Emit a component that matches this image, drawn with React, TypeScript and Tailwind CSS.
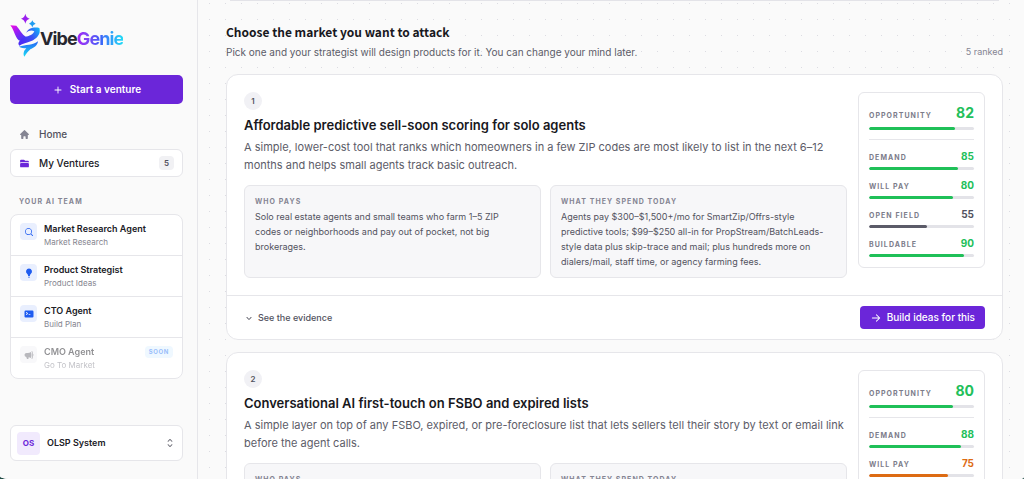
import { clsx } from 'clsx';
import type { IconType } from 'react-icons';
import {
  HiMiniArrowRight,
  HiMiniChevronDown,
  HiMiniChevronUpDown,
  HiMiniCommandLine,
  HiMiniFolder,
  HiMiniHome,
  HiMiniLightBulb,
  HiMiniMagnifyingGlass,
  HiMiniMegaphone,
  HiMiniPlus,
} from 'react-icons/hi2';

type Tone = 'good' | 'warn' | 'neutral';

interface Score {
  label: string;
  value: number;
  tone: Tone;
}

interface Market {
  rank: number;
  title: string;
  summary: string;
  pays?: string;
  spend?: string;
  opportunity: Score;
  scores: Score[];
}

interface Agent {
  name: string;
  role: string;
  icon: IconType;
  soon?: boolean;
}

const agents: Agent[] = [
  { name: 'Market Research Agent', role: 'Market Research', icon: HiMiniMagnifyingGlass },
  { name: 'Product Strategist', role: 'Product Ideas', icon: HiMiniLightBulb },
  { name: 'CTO Agent', role: 'Build Plan', icon: HiMiniCommandLine },
  { name: 'CMO Agent', role: 'Go To Market', icon: HiMiniMegaphone, soon: true },
];

const markets: Market[] = [
  {
    rank: 1,
    title: 'Affordable predictive sell-soon scoring for solo agents',
    summary:
      'A simple, lower-cost tool that ranks which homeowners in a few ZIP codes are most likely to list in the next 6–12 months and helps small agents track basic outreach.',
    pays: 'Solo real estate agents and small teams who farm 1–5 ZIP codes or neighborhoods and pay out of pocket, not big brokerages.',
    spend:
      'Agents pay $300–$1,500+/mo for SmartZip/Offrs-style predictive tools; $99–$250 all-in for PropStream/BatchLeads-style data plus skip-trace and mail; plus hundreds more on dialers/mail, staff time, or agency farming fees.',
    opportunity: { label: 'Opportunity', value: 82, tone: 'good' },
    scores: [
      { label: 'Demand', value: 85, tone: 'good' },
      { label: 'Will pay', value: 80, tone: 'good' },
      { label: 'Open field', value: 55, tone: 'neutral' },
      { label: 'Buildable', value: 90, tone: 'good' },
    ],
  },
  {
    rank: 2,
    title: 'Conversational AI first-touch on FSBO and expired lists',
    summary:
      'A simple layer on top of any FSBO, expired, or pre-foreclosure list that lets sellers tell their story by text or email link before the agent calls.',
    opportunity: { label: 'Opportunity', value: 80, tone: 'good' },
    scores: [
      { label: 'Demand', value: 88, tone: 'good' },
      { label: 'Will pay', value: 75, tone: 'warn' },
    ],
  },
];

const textTone: Record<Tone, string> = {
  good: 'text-[#22c05a]',
  warn: 'text-[#dd6b13]',
  neutral: 'text-[#52525e]',
};

const barTone: Record<Tone, string> = {
  good: 'bg-[#1fc058]',
  warn: 'bg-[#dd6b13]',
  neutral: 'bg-[#5b5b68]',
};

function Logo() {
  return (
    <a href="#" aria-label="VibeGenie" className="flex h-[44px] items-center">
      <svg viewBox="0 0 90 132" className="h-[44px] w-[30px] shrink-0" aria-hidden="true">
        <defs>
          <linearGradient id="wing" x1="0" y1="0" x2="0.8" y2="1">
            <stop offset="0" stopColor="#f50be0" />
            <stop offset="0.45" stopColor="#9a1cf5" />
            <stop offset="1" stopColor="#3a3df5" />
          </linearGradient>
          <linearGradient id="hook" x1="0.1" y1="0.6" x2="1" y2="0.1">
            <stop offset="0" stopColor="#4a2df5" />
            <stop offset="0.5" stopColor="#3a52f5" />
            <stop offset="1" stopColor="#12b4f8" />
          </linearGradient>
          <linearGradient id="tail" x1="0" y1="0" x2="0" y2="1">
            <stop offset="0" stopColor="#2463f5" />
            <stop offset="1" stopColor="#1bdcf5" />
          </linearGradient>
        </defs>
        <path d="M46 2 Q48 14 59 17 Q48 20 46 32 Q44 20 33 17 Q44 14 46 2Z" fill="#9a20ee" />
        <path d="M67 22 Q69 30 77 32 Q69 34 67 43 Q65 34 57 32 Q65 30 67 22Z" fill="#1f9cf0" />
        <path d="M1 37 L19 38 C28 48 36 64 48 72 C44 82 36 86 26 82 C14 70 14 54 1 37Z" fill="url(#wing)" />
        <path
          d="M49 59 C54 46 71 41 88 45 C93 62 82 76 64 84 C50 89 38 92 28 98 C20 90 30 80 44 72 C58 70 70 64 73 55 C64 50 56 53 49 59Z"
          fill="url(#hook)"
        />
        <path
          d="M27 101 C46 95 70 97 84 85 C82 99 71 105 61 109 C55 114 50 121 43 131 C38 122 42 113 49 106 C41 106 33 105 27 101Z"
          fill="url(#tail)"
        />
      </svg>
      <span className="pt-2 text-[18px] leading-6 font-bold tracking-tighter text-[#27272f]">
        Vibe
        <span className="bg-linear-to-r from-[#a31cf5] via-[#3d5cf8] to-[#22dcf5] bg-clip-text text-transparent">
          Genie
        </span>
      </span>
    </a>
  );
}

function AgentRow({ agent }: { agent: Agent }) {
  const Icon = agent.icon;
  return (
    <li className="border-b border-[#e6e6ea] last:border-b-0">
      <a href="#" className={clsx('flex h-10 gap-[7px] px-[9px] pt-[7px]', agent.soon && 'opacity-50')}>
        <span
          className={clsx(
            'mt-px flex size-[17px] shrink-0 items-center justify-center rounded',
            agent.soon ? 'bg-[#f1f1f4] text-[#71717a]' : 'bg-[#e9effe] text-[#1f5cf0]'
          )}
        >
          <Icon className="size-[10px]" />
        </span>
        <span className="min-w-0 flex-1">
          <span className="block truncate text-[9px] leading-[14px] font-semibold text-[#202026]">{agent.name}</span>
          <span className="block truncate text-[8px] leading-3 text-[#85858f]">{agent.role}</span>
        </span>
        {agent.soon && (
          <span className="mt-px h-3 rounded-sm bg-[#dff0ff] px-1 text-[6px] leading-3 font-bold tracking-widest text-[#2f7bf5]">
            SOON
          </span>
        )}
      </a>
    </li>
  );
}

function Sidebar() {
  return (
    <aside className="flex w-[198px] shrink-0 flex-col border-r border-[#e6e6ea] bg-[#fafafa] pt-[13px] pr-[14px] pb-[18px] pl-[10px]">
      <Logo />
      <button className="mt-[18px] flex h-[29px] shrink-0 items-center justify-center gap-[6px] rounded-[5px] bg-[#6b26d9] text-[10px] font-semibold text-white">
        <HiMiniPlus className="size-3" />
        Start a venture
      </button>

      <nav className="mt-[17px] flex flex-col gap-px text-[10px] font-medium">
        <a href="#" className="flex h-[27px] items-center gap-[9px] px-[9px] text-[#52525e]">
          <HiMiniHome className="size-[11px] text-[#858593]" />
          Home
        </a>
        <a
          href="#"
          className="flex h-[28px] items-center gap-[9px] rounded-md border border-[#e6e6ea] bg-white px-2 text-[#202026]"
        >
          <HiMiniFolder className="size-[11px] text-[#6b26d9]" />
          <span className="flex-1">My Ventures</span>
          <span className="rounded bg-[#f1f1f4] px-[5px] text-[8px] leading-[14px] font-semibold text-[#52525e]">5</span>
        </a>
      </nav>

      <h2 className="mt-[19px] px-[9px] text-[7px] leading-3 font-bold tracking-[0.15em] text-[#858593]">
        YOUR AI TEAM
      </h2>
      <ul className="mt-[6px] rounded-lg border border-[#e6e6ea] bg-white">
        {agents.map(agent => (
          <AgentRow key={agent.name} agent={agent} />
        ))}
      </ul>

      <button className="mt-auto flex h-9 shrink-0 items-center gap-[7px] rounded-md border border-[#e6e6ea] bg-white px-[6px] text-left">
        <span className="flex size-[23px] items-center justify-center rounded bg-[#f1eafd] text-[8px] font-bold text-[#6b26d9]">
          OS
        </span>
        <span className="flex-1 text-[9px] font-semibold text-[#202026]">OLSP System</span>
        <HiMiniChevronUpDown className="size-3 text-[#71717a]" />
      </button>
    </aside>
  );
}

function Bar({ score }: { score: Score }) {
  return (
    <div className="h-[3px] overflow-hidden rounded-full bg-[#e3e3e8]">
      <div className={clsx('h-full rounded-full', barTone[score.tone])} style={{ width: `${score.value}%` }} />
    </div>
  );
}

function ScorePanel({ market }: { market: Market }) {
  const { opportunity, scores } = market;
  return (
    <div className="w-[127px] shrink-0 self-start rounded-md border border-[#e6e6ea] px-[10px] pt-[11px] pb-[10px]">
      <div className="border-b border-[#e6e6ea] pb-[9px]">
        <div className="mb-[5px] flex items-baseline justify-between">
          <span className="text-[7px] font-bold tracking-[0.15em] text-[#7c7c8a] uppercase">{opportunity.label}</span>
          <span className={clsx('text-[14px] leading-[18px] font-bold', textTone[opportunity.tone])}>
            {opportunity.value}
          </span>
        </div>
        <Bar score={opportunity} />
      </div>
      <div className="mt-[10px] flex flex-col gap-[9px]">
        {scores.map(score => (
          <div key={score.label}>
            <div className="mb-[4px] flex h-[13px] items-baseline justify-between">
              <span className="text-[7px] font-bold tracking-[0.15em] text-[#7c7c8a] uppercase">{score.label}</span>
              <span className={clsx('text-[10px] leading-[13px] font-bold', textTone[score.tone])}>{score.value}</span>
            </div>
            <Bar score={score} />
          </div>
        ))}
      </div>
    </div>
  );
}

function Fact({ label, text }: { label: string; text?: string }) {
  return (
    <div className="rounded-md border border-[#e6e6ea] bg-[#f7f7f9] py-2 pr-4 pl-[10px]">
      <h4 className="text-[7px] leading-[15px] font-bold tracking-[0.15em] text-[#858593] uppercase">{label}</h4>
      <p className="text-[9px] leading-[15px] text-[#52525e]">{text}</p>
    </div>
  );
}

function MarketCard({ market }: { market: Market }) {
  return (
    <article className="rounded-xl border border-[#e6e6ea] bg-white">
      <div className="flex gap-[11px] p-[17px]">
        <div className="min-w-0 flex-1">
          <span className="flex size-[18px] items-center justify-center rounded-full bg-[#f1f1f5] text-[8px] font-semibold text-[#52525e]">
            {market.rank}
          </span>
          <h3 className="mt-[6px] text-[13px] leading-[18px] font-semibold text-[#18181d]">{market.title}</h3>
          <p className="mt-[4px] text-[11px] leading-[18px] text-[#5c5c68]">{market.summary}</p>
          <div className="mt-[11px] grid grid-cols-2 gap-[9px]">
            <Fact label="Who pays" text={market.pays} />
            <Fact label="What they spend today" text={market.spend} />
          </div>
        </div>
        <ScorePanel market={market} />
      </div>
      <footer className="flex h-[44px] items-center justify-between border-t border-[#e6e6ea] px-[17px]">
        <button className="flex items-center gap-1 text-[9px] font-medium text-[#52525e]">
          <HiMiniChevronDown className="size-[10px]" />
          See the evidence
        </button>
        <button className="flex h-[23px] items-center gap-[5px] rounded bg-[#6b26d9] px-[10px] text-[10px] font-medium text-white">
          <HiMiniArrowRight className="size-3" />
          Build ideas for this
        </button>
      </footer>
    </article>
  );
}

export default function App() {
  return (
    <div className="h-screen bg-[#1f4a45] font-['Inter',sans-serif]">
      <div className="flex h-full overflow-hidden bg-[#fafafa] [border-radius:0_0_4px_9px/0_0_2px_3px]">
        <Sidebar />
        <main className="min-w-0 flex-1 overflow-hidden bg-[radial-gradient(circle_at_0_0,#dcdce2_1px,transparent_1px)] [background-size:16px_16px] bg-[position:11px_3px] pr-[21px] pl-[28px]">
          <div className="mx-1 h-px bg-[#e3e3e8]" />
          <header className="mt-[20px] mb-[13px] flex items-end justify-between">
            <div>
              <h1 className="font-['Noto_Sans_CJK_SC',sans-serif] text-[12px] leading-[21px] font-bold text-[#18181d]">
                Choose the market you want to attack
              </h1>
              <p className="mt-px text-[10px] leading-[18px] text-[#5c5c68]">
                Pick one and your strategist will design products for it. You can change your mind later.
              </p>
            </div>
            <span className="text-[9px] leading-[18px] text-[#858593]">5 ranked</span>
          </header>
          <section className="flex flex-col gap-3">
            {markets.map(market => (
              <MarketCard key={market.rank} market={market} />
            ))}
          </section>
        </main>
      </div>
    </div>
  );
}
